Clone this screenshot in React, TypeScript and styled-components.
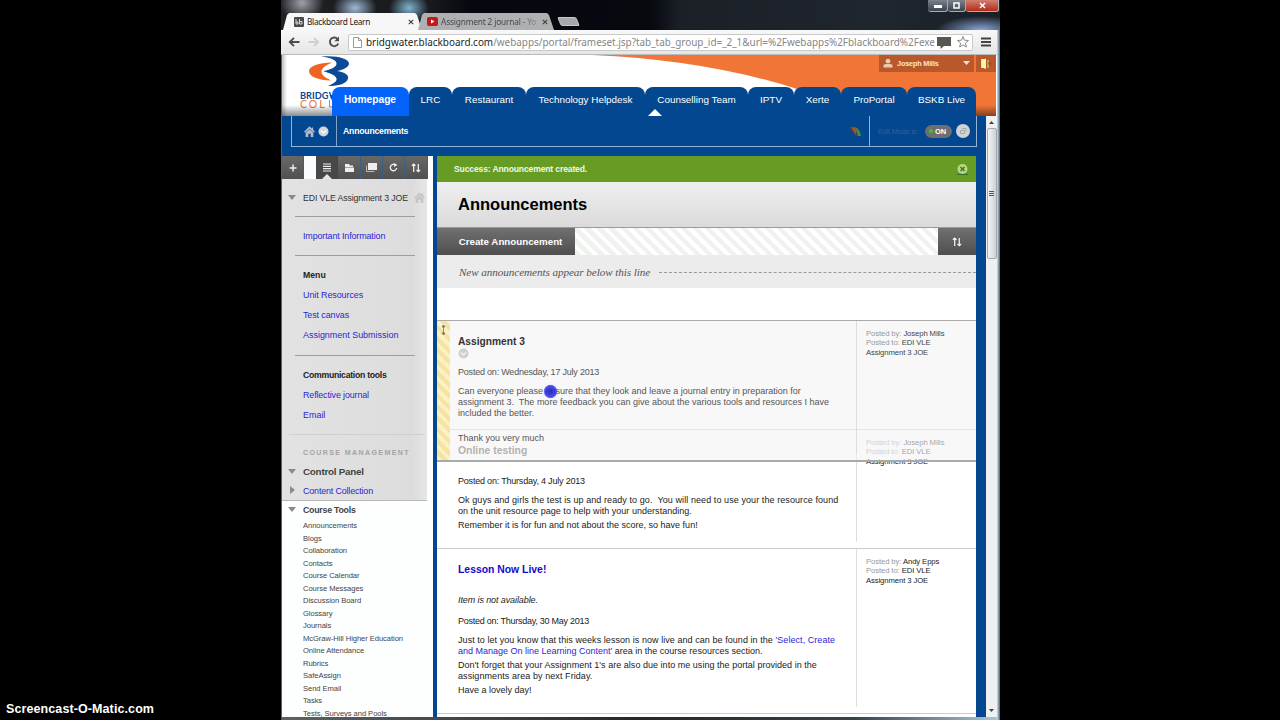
import React from "react";
import styled, { createGlobalStyle, css } from "styled-components";

const BLUE = "#02478f";
const LINK = "#2a1fd6";

const Global = createGlobalStyle`
  * { box-sizing: border-box; }
  body { margin: 0; background: #000; overflow: hidden; }
`;

const Screen = styled.div`
  position: relative;
  width: 1280px;
  height: 720px;
  overflow: hidden;
  padding-left: 281px;
  background: #000;
  font-family: "Liberation Sans", Arial, sans-serif;
  font-size: 9px;
  line-height: 11px;
  color: #222;
`;

const Watermark = styled.div`
  position: absolute;
  left: 6px;
  bottom: 3px;
  font-size: 12.5px;
  line-height: 16px;
  font-weight: bold;
  letter-spacing: 0.1px;
  color: #fff;
  white-space: nowrap;
`;

const Desktop = styled.div`
  width: 719px;
  height: 720px;
  display: flex;
  flex-direction: column;
  background: linear-gradient(90deg, #5d6266, #23282b 50%, #39434a 80%, #a9c3d2 715px, #b9d0dc 717px, #56778c 718px);
`;

const TabStrip = styled.div`
  height: 30px;
  flex: none;
  display: flex;
  justify-content: space-between;
  background:
    radial-gradient(ellipse 22px 18px at 21px 3px, #9da2a9, transparent),
    radial-gradient(ellipse 22px 16px at 74px 8px, #9fb9d6, transparent),
    radial-gradient(ellipse 20px 16px at 128px 8px, #7fb3cf, transparent),
    radial-gradient(ellipse 45px 14px at 700px 30px, #8aa5d6, transparent),
    linear-gradient(90deg, #1f2124 0, #17191d 150px, #07080f 190px, #07090f 370px, #1b2027 400px, #20262e 600px, #1a2027);
`;

const Tabs = styled.div`
  display: flex;
  align-items: flex-end;
  padding-left: 2px;
`;

const Tab = styled.div<{ $w: number; $on?: boolean }>`
  width: ${(p) => p.$w}px;
  height: 17px;
  margin-right: ${(p) => (p.$on ? -4 : 0)}px;
  padding: 0 ${(p) => (p.$on ? 8 : 6)}px 0 ${(p) => (p.$on ? 11 : 9)}px;
  display: flex;
  align-items: center;
  gap: 3px;
  clip-path: polygon(6px 0, calc(100% - 7px) 0, calc(100% - 5px) 2px, 100% 100%, 0 100%, 4px 2px);
  background: ${(p) => (p.$on ? "#f7f7f7" : "#aeb0b2")};
  color: ${(p) => (p.$on ? "#222" : "#444")};
  font-family: "Noto Sans", "Open Sans", sans-serif;
  font-size: 8.3px;
  letter-spacing: ${(p) => (p.$on ? -0.32 : -0.16)}px;
  white-space: nowrap;
`;

const TabLabel = styled.span<{ $fade?: boolean }>`
  flex: 1;
  margin-top: -1px;
  ${(p) =>
    p.$fade &&
    css`
      background: linear-gradient(90deg, #444 80%, #999);
      background-clip: text;
      color: transparent;
    `}
`;

const NewTab = styled.div`
  width: 19px;
  height: 9px;
  margin: 0 0 4px 5px;
  background: #a6a8ab;
  border: 1px solid #c8c8c8;
  border-radius: 2px;
  transform: skewX(22deg);
`;

const WindowButtons = styled.div`
  display: flex;
  height: 12px;
  margin-right: 1px;
`;

const WindowButton = styled.div<{ $w: number; $close?: boolean }>`
  width: ${(p) => p.$w}px;
  display: flex;
  align-items: center;
  justify-content: center;
  border: 1px solid #a8adb3;
  border-top: 0;
  border-left-width: 0;
  border-radius: 0 0 3px 3px;
  background: ${(p) => (p.$close ? "linear-gradient(#d08070, #b32b17)" : "linear-gradient(#7b828b, #3b434d)")};
`;

const AddressBar = styled.div`
  height: 25px;
  flex: none;
  display: flex;
  align-items: center;
  margin-right: 3px;
  padding: 0 6px 0 7px;
  background: linear-gradient(#f8f8f8, #e6e6e6);
  border-bottom: 1px solid #bbb;
`;

const NavIcons = styled.div`
  display: flex;
  gap: 8px;
  width: 60px;
`;

const UrlField = styled.div`
  flex: 1;
  height: 17px;
  min-width: 0;
  display: flex;
  align-items: center;
  padding: 0 2px 0 4px;
  border: 1px solid #c9c9c9;
  border-radius: 2px;
  background: #fff;
`;

const Url = styled.div`
  flex: 1;
  min-width: 0;
  padding-left: 4px;
  font-family: "Noto Sans", "Open Sans", sans-serif;
  font-size: 9.92px;
  line-height: 15px;
  color: #858585;
  white-space: nowrap;
  b { font-weight: normal; color: #1c1c1c; }
`;

const MenuIcon = styled.div`
  padding-left: 8px;
  display: flex;
`;

const Page = styled.div`
  width: 715px;
  height: 662px;
  margin-left: 1px;
  display: flex;
  flex-direction: column;
  background: ${BLUE};
`;

const Header = styled.header`
  position: relative;
  height: 61px;
  flex: none;
  display: flex;
  align-items: flex-end;
  background: #fff;
`;

const HeaderArt = styled.svg`
  position: absolute;
  inset: 0;
`;

const UserBar = styled.div`
  position: absolute;
  right: 1px;
  top: 0;
  display: flex;
  gap: 2px;
  font-size: 7.3px;
  font-weight: bold;
  letter-spacing: -0.18px;
  color: #fbe3d2;
`;

const UserCell = styled.div<{ $w: number }>`
  width: ${(p) => p.$w}px;
  height: 17px;
  display: flex;
  align-items: center;
  justify-content: space-between;
  padding: 0 4px 1px;
  background: #b9592b;
  span { flex: 1; padding-left: 4px; white-space: nowrap; }
`;

const MainNav = styled.nav`
  position: relative;
  display: flex;
  margin-left: 50px;
`;

const NavTab = styled.a<{ $w: number; $on?: boolean }>`
  width: ${(p) => p.$w}px;
  height: 29px;
  line-height: 26px;
  text-align: center;
  text-indent: ${(p) => (p.$on ? -1 : 0)}px;
  border-radius: 8px 8px 0 0;
  background: ${(p) => (p.$on ? "#0463fb" : BLUE)};
  color: #fff;
  font-size: ${(p) => (p.$on ? 10.2 : 9.9)}px;
  font-weight: ${(p) => (p.$on ? "bold" : "normal")};
  white-space: nowrap;
`;

const NavPointer = styled.div`
  position: absolute;
  left: 316px;
  bottom: 0;
  border: 7px solid transparent;
  border-top: 0;
  border-bottom: 7px solid #fff;
`;

const Crumbs = styled.div`
  height: 31px;
  flex: none;
  margin: 0 20px 9px 9px;
  display: flex;
  align-items: center;
  border: 1px solid #93b4d6;
  border-top: 0;
  color: #fff;
`;

const CrumbHome = styled.div`
  width: 45px;
  height: 100%;
  display: flex;
  align-items: center;
  gap: 3px;
  padding-left: 12px;
  border-right: 1px solid #7fa3c9;
`;

const CrumbTitle = styled.div`
  flex: 1;
  padding-left: 6px;
  font-weight: bold;
  font-size: 8.7px;
  letter-spacing: -0.22px;
`;

const EditMode = styled.div`
  width: 107px;
  height: 100%;
  margin-left: 8px;
  display: flex;
  align-items: center;
  gap: 4px;
  padding: 0 6px 0 8px;
  border-left: 1px solid #93b4d6;
  font-size: 7.3px;
  letter-spacing: -0.15px;
  color: #34618f;
  white-space: nowrap;
`;

const Toggle = styled.div`
  width: 27px;
  height: 13px;
  margin-left: auto;
  display: flex;
  align-items: center;
  gap: 2px;
  padding-left: 4px;
  border-radius: 7px;
  background: #6d6f70;
  color: #fff;
  font-size: 7.5px;
  font-weight: bold;
  i { width: 4px; height: 4px; border-radius: 50%; background: #3fc41e; }
`;

const Columns = styled.div`
  flex: 1;
  min-height: 0;
  display: flex;
`;

const Sidebar = styled.aside`
  width: 151px;
  overflow: hidden;
  background: #fdfefe;
`;

const SideTools = styled.div`
  display: flex;
  width: 146px;
  height: 23px;
`;

const SideTool = styled.div<{ $w: number; $kind?: "gap" | "on" }>`
  position: relative;
  width: ${(p) => p.$w}px;
  display: flex;
  align-items: center;
  justify-content: center;
  border-right: ${(p) => (p.$kind ? 0 : 1)}px solid #3b5f85;
  background: ${(p) => (p.$kind === "gap" ? "#fbfcff" : p.$kind === "on" ? "#484848" : "linear-gradient(#686868, #505050)")};
`;

const ToolPointer = styled.div`
  position: absolute;
  bottom: 0;
  border: 5px solid transparent;
  border-top: 0;
  border-bottom-color: #e6e6e6;
`;

const CourseMenu = styled.div`
  width: 145px;
  height: 322px;
  padding: 13px 0 0 21px;
  border-bottom: 1px solid #b9b9b9;
  background: linear-gradient(90deg, #e2e2e2, #dedede 70%, #dcdcdc 90%, #e6e6e6);
`;

const Row = styled.div<{ $mt?: number; $size?: number; $bold?: boolean; $link?: boolean; $color?: string; $ls?: number }>`
  position: relative;
  height: 12px;
  line-height: 12px;
  margin-top: ${(p) => p.$mt ?? 0}px;
  font-size: ${(p) => p.$size ?? 8.95}px;
  font-weight: ${(p) => (p.$bold ? "bold" : "normal")};
  letter-spacing: ${(p) => p.$ls ?? 0}px;
  color: ${(p) => p.$color ?? (p.$link ? LINK : "#222")};
  white-space: nowrap;
`;

const Rule = styled.hr<{ $mt: number; $light?: boolean }>`
  height: 1px;
  border: 0;
  margin: ${(p) => p.$mt}px ${(p) => (p.$light ? 2 : 12)}px 0 ${(p) => (p.$light ? -14 : -8)}px;
  background: ${(p) => (p.$light ? "#cfcfcf" : "#9d9d9d")};
`;

const Arrow = styled.i<{ $right?: boolean }>`
  position: absolute;
  left: -15px;
  top: 3px;
  border: 4px solid transparent;
  border-top: 5px solid #8a8a8a;
  border-bottom: 0;
  ${(p) =>
    p.$right &&
    css`
      left: -13px;
      top: 1px;
      border: 4px solid transparent;
      border-left: 5px solid #8a8a8a;
      border-right: 0;
    `}
`;

const SideHome = styled.span`
  position: absolute;
  left: 111px;
  top: 0;
  display: flex;
`;

const ToolList = styled.div`
  padding: 3px 0 0 21px;
`;

const Tool = styled.a`
  display: block;
  height: 12.53px;
  line-height: 12.5px;
  font-size: 7.6px;
  letter-spacing: -0.06px;
  color: #444;
  white-space: nowrap;
`;

const Tools = styled.div`
  padding-top: 4px;
`;

const Content = styled.main`
  width: 539px;
  margin-left: 4px;
  overflow: hidden;
  background: #fff;
`;

const Success = styled.div`
  height: 26px;
  display: flex;
  align-items: center;
  justify-content: space-between;
  padding: 0 8px 0 17px;
  background: #669c24;
  color: #f0f7e4;
  font-size: 8.55px;
  font-weight: bold;
  letter-spacing: -0.13px;
`;

const Title = styled.h1`
  margin: 0;
  height: 45px;
  padding-left: 21px;
  line-height: 44px;
  font-size: 16.5px;
  color: #000;
  background: linear-gradient(#efefef, #dadada);
`;

const ActionBar = styled.div`
  height: 28px;
  display: flex;
  border-top: 1px solid #9b9b9b;
  background: repeating-linear-gradient(45deg, #fff 0 4px, #f0f2f0 4px 8.5px);
`;

const ActionButton = styled.div<{ $w: number }>`
  width: ${(p) => p.$w}px;
  display: flex;
  align-items: center;
  justify-content: center;
  padding-left: ${(p) => (p.$w > 50 ? 9 : 0)}px;
  background: linear-gradient(#707070, #4f4f4f);
  color: #fff;
  font-size: 9.75px;
  font-weight: bold;
`;

const Spacer = styled.div`
  flex: 1;
`;

const NewLine = styled.div`
  height: 33px;
  display: flex;
  align-items: center;
  gap: 9px;
  padding: 1px 0 0 22px;
  background: #ececec;
  color: #555;
  font-family: "Liberation Serif", Georgia, serif;
  font-style: italic;
  font-size: 11.2px;
  letter-spacing: -0.09px;
  white-space: nowrap;
  &::after { content: ""; flex: 1; border-top: 1px dashed #999; }
`;

const List = styled.div`
  position: relative;
  padding-top: 141px;
`;

const Item = styled.article<{ $h: number }>`
  height: ${(p) => p.$h}px;
  display: flex;
  border-top: 1px solid #cbcfcc;
  background: #fff;
`;

const Dragged = styled(Item)`
  position: absolute;
  left: 0;
  top: 32px;
  width: 539px;
  border-top: 1px solid #aaa;
  border-bottom: 2px solid #aaa;
  background: rgba(243, 243, 243, 0.62);
`;

const Grip = styled.div`
  width: 13px;
  height: 100%;
  padding: 3px 0 0 3px;
  background: repeating-linear-gradient(45deg, #f9f2c6 0 4px, #f6e3a0 4px 8px);
`;

const Body = styled.div<{ $pad: number }>`
  width: ${(p) => p.$pad + 399}px;
  height: calc(100% - 6px);
  padding: 14px 0 0 ${(p) => p.$pad}px;
  border-right: 1px solid #dedede;
`;

const Line = styled.div<{ $mt?: number; $c?: string; $italic?: boolean; $ls?: number }>`
  height: 11px;
  line-height: 11px;
  margin-top: ${(p) => p.$mt ?? 0}px;
  font-size: 9px;
  font-style: ${(p) => (p.$italic ? "italic" : "normal")};
  letter-spacing: ${(p) => p.$ls ?? 0}px;
  color: ${(p) => p.$c ?? "#222"};
  white-space: pre;
  a { color: ${LINK}; }
`;

const Heading = styled.h3<{ $c: string; $size?: number }>`
  margin: 0;
  height: 13px;
  line-height: 13px;
  font-size: ${(p) => p.$size ?? 10.6}px;
  color: ${(p) => p.$c};
  white-space: nowrap;
`;

const Meta = styled.div<{ $c?: string }>`
  padding: 7.5px 0 0 9px;
  font-size: 7.7px;
  line-height: 9.8px;
  letter-spacing: -0.1px;
  color: ${(p) => p.$c ?? "#222"};
  white-space: nowrap;
  span { color: #999; }
`;

const Chevron = styled.div`
  height: 12px;
  display: flex;
`;

const ClickDot = styled.div`
  position: absolute;
  left: 107px;
  top: 97px;
  width: 13px;
  height: 13px;
  border-radius: 50%;
  background: radial-gradient(rgba(32, 32, 190, 0.9), rgba(60, 60, 255, 0.85));
  box-shadow: 0 0 1px #5b5bff;
`;

const Scrollbar = styled.div`
  width: 11px;
  height: 601px;
  margin: -40px 0 0 auto;
  display: flex;
  flex-direction: column;
  align-items: center;
  background: #eef0f1;
`;

const ScrollThumb = styled.div`
  width: 10px;
  height: 131px;
  margin: 0 0 auto;
  display: flex;
  align-items: center;
  justify-content: center;
  border: 1px solid #a5a9ab;
  border-radius: 2px;
  background: linear-gradient(90deg, #f4f4f4, #cdd0d2);
`;

const Person = () => (
  <svg width="10" height="10" viewBox="0 0 11 10" fill="#f0c8b0">
    <circle cx="5.5" cy="3" r="2.6" />
    <path d="M0.5 10V8q0-1.5 2.5-1.8h5Q10.500 6.500 10.500 8v2z" />
  </svg>
);

const House = ({ color, size = 12 }: { color: string; size?: number }) => (
  <svg width={size} height={size} viewBox="0 0 12 12" fill={color}>
    <path d="M6 0.300 0 6.200l1.200 1.200L6 3l4.800 4.400L12 6.200l-2-2V1.500H8.300V2.600z" />
    <path d="M1.800 7.300 6 3.500l4.200 3.800V12H7.300V8.500H4.700V12H1.800z" />
  </svg>
);

const RoundChevron = ({ fill, stroke }: { fill: string; stroke: string }) => (
  <svg width="11" height="11" viewBox="0 0 11 11">
    <circle cx="5.5" cy="5.5" r="5" fill={fill} />
    <path d="m3 4.500 2.500 2.500L8 4.500" fill="none" stroke={stroke} strokeWidth="1.400" />
  </svg>
);

const SortArrows = () => (
  <svg width="10" height="10" viewBox="0 0 10 10" fill="none" stroke="#eee" strokeWidth="1.300">
    <path d="M2.700 9V1.200M0.900 2.800l1.800-1.600 1.800 1.600M7.300 1v7.500M5.500 7l1.800 1.600L9.100 7" />
  </svg>
);

const Cross = ({ color = "#444", size = 6 }: { color?: string; size?: number }) => (
  <svg width={size} height={size} viewBox="0 0 6 6" stroke={color} strokeWidth="1.200">
    <path d="m0.800 0.800 4.400 4.400M5.200 0.800 0.800 5.200" />
  </svg>
);

const tools = [
  "Announcements", "Blogs", "Collaboration", "Contacts", "Course Calendar", "Course Messages",
  "Discussion Board", "Glossary", "Journals", "McGraw-Hill Higher Education", "Online Attendance",
  "Rubrics", "SafeAssign", "Send Email", "Tasks", "Tests, Surveys and Pools",
];

const navTabs: [string, number][] = [
  ["Homepage", 77], ["LRC", 43], ["Restaurant", 74], ["Technology Helpdesk", 119], ["Counselling Team", 103],
  ["IPTV", 46], ["Xerte", 47], ["ProPortal", 66], ["BSKB Live", 69],
];

const PostedMeta = ({ name, color }: { name: string; color?: string }) => (
  <Meta $c={color}>
    <span>Posted by:</span> {name}
    <br />
    <span>Posted to:</span> EDI VLE
    <br />
    Assignment 3 JOE
  </Meta>
);

export default function App() {
  return (
    <Screen>
      <Global />
      <Desktop>
        <TabStrip>
          <Tabs>
            <Tab $w={139} $on>
              <svg width="10" height="10" viewBox="0 0 10 10">
                <rect width="10" height="10" rx="1" fill="#4a4a48" />
                <path d="M2 2v5h2V5H2M5.500 2v5h2.500V4.500H5.500" fill="none" stroke="#d8d5cc" />
              </svg>
              <TabLabel>Blackboard Learn</TabLabel>
              <Cross />
            </Tab>
            <Tab $w={136}>
              <svg width="11" height="9" viewBox="0 0 11 9">
                <rect width="11" height="9" rx="2" fill="#c3171b" />
                <path d="M4 2.500v4L7.500 4.500z" fill="#fff" />
              </svg>
              <TabLabel $fade>Assignment 2 journal - Yo</TabLabel>
              <Cross />
            </Tab>
            <NewTab />
          </Tabs>
          <WindowButtons>
            <WindowButton $w={20}>
              <svg width="8" height="4"><rect width="8" height="3" y="1" fill="#fff" /></svg>
            </WindowButton>
            <WindowButton $w={18}>
              <svg width="7" height="7"><rect x="1" y="1" width="5" height="5" fill="none" stroke="#fff" strokeWidth="1.500" /></svg>
            </WindowButton>
            <WindowButton $w={33} $close><Cross color="#fff" size={7} /></WindowButton>
          </WindowButtons>
        </TabStrip>
        <AddressBar>
          <NavIcons>
            <svg width="12" height="12" viewBox="0 0 12 12" fill="none" stroke="#4d4d4d" strokeWidth="1.900"><path d="M11.500 6H2M6 1.800 1.800 6 6 10.200" /></svg>
            <svg width="12" height="12" viewBox="0 0 12 12" fill="none" stroke="#cfcfcf" strokeWidth="1.900"><path d="M0.500 6H10M6 1.800 10.200 6 6 10.200" /></svg>
            <svg width="12" height="12" viewBox="0 0 12 12"><path d="M9.600 3.200A4.300 4.300 0 1 0 10.200 7.500" fill="none" stroke="#4d4d4d" strokeWidth="1.900" /><path d="M11 0.500V5.200H6.300z" fill="#4d4d4d" /></svg>
          </NavIcons>
          <UrlField>
            <svg width="9" height="11" viewBox="0 0 9 11" fill="#fff" stroke="#999"><path d="M0.500 0.500h5l3 3v7h-8zM5.500 0.500v3h3" /></svg>
            <Url><b>bridgwater.blackboard.com</b>/webapps/portal/frameset.jsp?tab_tab_group_id=_2_1&amp;url=%2Fwebapps%2Fblackboard%2Fexe</Url>
            <svg width="14" height="13" viewBox="0 0 14 13"><path d="M0 1h14v9H7l-3.500 3V10H0z" fill="#555750" /></svg>
            <svg width="19" height="14" viewBox="-6 0 19 14" fill="#fff" stroke="#8b8b8b"><path d="m6 1.500 1.500 3.700 4 .3-3.100 2.600 1 3.900L6 9.900 2.600 12l1-3.900L.5 5.500l4-.3z" /></svg>
          </UrlField>
          <MenuIcon><svg width="10" height="10" fill="#444"><path d="M0 0.500h10v2H0zM0 4h10v2H0zM0 7.500h10v2H0z" /></svg></MenuIcon>
        </AddressBar>
        <Page>
          <Header>
            <HeaderArt width="714" height="61" viewBox="0 0 714 61">
              <defs>
                <linearGradient id="foot" x1="0" y1="0" x2="0" y2="1">
                  <stop offset="0" stopColor="#000" stopOpacity="0" />
                  <stop offset="1" stopColor="#000" stopOpacity="0.45" />
                </linearGradient>
                <linearGradient id="side" x1="0" y1="0" x2="1" y2="0">
                  <stop offset="0" stopColor="#000" stopOpacity="0.25" />
                  <stop offset="1" stopColor="#000" stopOpacity="0" />
                </linearGradient>
              </defs>
              <path d="M310 0Q425 5 515 34L530 61H714V0z" fill="#f17537" />
              <path d="M39 1.500C56 0 67 4 67 8.500C67 12 62 14.500 55 16C63 17.500 67 20 66 23.500C65 28.500 57 31 46 31C53 28 56 25.500 54 22.500C53 20 48 18 41.500 16.200C49 14.500 54 12.500 54.500 9C55 5.500 50 3 39 1.500z" fill="#0b4a97" />
              <path d="M50 7.500C37 7.500 27 11 27 16.200C27 21.500 36 25 49 25.500C43 22.500 39.500 20 39.500 16.800C39.500 13.500 43 10.500 50 7.500z" fill="#ef6423" />
              <text x="18" y="43.500" fontSize="9.2" fontWeight="bold" fill="#0b4a97" fontFamily="Lato, sans-serif">BRIDG</text>
              <path d="M47.500 37l1.800 6L50 40" fill="none" stroke="#0b4a97" strokeWidth="1.300" />
              <text x="18" y="52.500" fontSize="10.500" fill="#e5763c" letterSpacing="2" fontFamily="Lato, sans-serif">COL</text>
              <path d="M47.500 45v7H50" fill="none" stroke="#e5763c" />
              <rect y="50" width="714" height="11" fill="url(#foot)" />
              <rect width="5" height="61" fill="url(#side)" />
            </HeaderArt>
            <UserBar>
              <UserCell $w={95}>
                <Person />
                <span>Joseph Mills</span>
                <svg width="7" height="4" fill="#fbe0d0"><path d="M0 0h7L3.500 4z" /></svg>
              </UserCell>
              <UserCell $w={20}>
                <svg width="12" height="11" viewBox="0 0 12 11"><path d="M1 1h5v9H1z" fill="#e9e3b0" /><path d="m2 2 4-1.500V11L2 9.500z" fill="#fff3a8" /><path d="M7 2h2v8H7z" fill="#8cba5a" /><path d="M8 5.500h4M10 3.500v4" stroke="#d33" strokeWidth="1.500" /></svg>
              </UserCell>
            </UserBar>
            <MainNav>
              {navTabs.map(([label, w], i) => (
                <NavTab key={label} $w={w} $on={i === 0}>{label}</NavTab>
              ))}
              <NavPointer />
            </MainNav>
          </Header>
          <Crumbs>
            <CrumbHome>
              <House color="#aebccb" size={11} />
              <RoundChevron fill="#cfd6dc" stroke="#fff" />
            </CrumbHome>
            <CrumbTitle>Announcements</CrumbTitle>
            <svg width="12" height="10" viewBox="0 0 12 10"><path d="M0 1 5 0l6 10H6z" fill="#3c4653" /><path d="m2 1 5 8V2z" fill="#a9542f" /><path d="M6 1q5 2 6 9H9z" fill="#43913f" /><path d="M5 1q3 2 4 7z" fill="#a03a4a" /></svg>
            <EditMode>
              Edit Mode is:
              <Toggle><i />ON</Toggle>
              <svg width="14" height="14" viewBox="0 0 14 14"><circle cx="7" cy="7" r="7" fill="#cfd3d4" /><path d="M4.500 6.500h4v3h-4zM6 4.500h4v3" fill="none" stroke="#a4abad" /></svg>
            </EditMode>
          </Crumbs>
          <Columns>
            <Sidebar>
              <SideTools>
                <SideTool $w={22}><svg width="8" height="8" stroke="#eee" strokeWidth="1.500"><path d="M4 0.500v7M0.500 4h7" /></svg></SideTool>
                <SideTool $w={12} $kind="gap" />
                <SideTool $w={22} $kind="on">
                  <svg width="8" height="9" stroke="#eee" strokeWidth="1.200"><path d="M0 1h8M0 3.300h8M0 5.600h8M0 8h8" /></svg>
                  <ToolPointer />
                </SideTool>
                <SideTool $w={23}><svg width="9" height="8" fill="#eee"><path d="M0 0h4l1 1.500h3V3H0zM0 3.500h9V8H0z" /></svg></SideTool>
                <SideTool $w={22}><svg width="11" height="9"><path d="M0.500 2.500v6h8" fill="none" stroke="#bbb" /><path d="M2 0h9v7H2z" fill="#eee" /></svg></SideTool>
                <SideTool $w={22}><svg width="9" height="9" viewBox="0 0 9 9"><path d="M6.500 2A3.200 3.200 0 1 0 7.700 5" fill="none" stroke="#eee" strokeWidth="1.400" /><path d="M5 0v4l3.500-2z" fill="#eee" /></svg></SideTool>
                <SideTool $w={23}><SortArrows /></SideTool>
              </SideTools>
              <CourseMenu>
                <Row $color="#333" $size={8.75} $ls={-0.13}><Arrow />EDI VLE Assignment 3 JOE<SideHome><House color="#c5c5c5" size={11} /></SideHome></Row>
                <Rule $mt={12} />
                <Row $mt={13} $link $ls={-0.13}>Important Information</Row>
                <Rule $mt={13} />
                <Row $mt={13} $bold $size={8.7}>Menu</Row>
                <Row $mt={8} $link $ls={-0.07}>Unit Resources</Row>
                <Row $mt={8} $link $ls={-0.1}>Test canvas</Row>
                <Row $mt={8} $link>Assignment Submission</Row>
                <Rule $mt={14} />
                <Row $mt={13} $bold $size={8.7} $ls={-0.28}>Communication tools</Row>
                <Row $mt={8} $link $ls={-0.15}>Reflective journal</Row>
                <Row $mt={8} $link>Email</Row>
                <Rule $mt={13} $light />
                <Row $mt={12} $size={7.1} $bold $color="#a3a3a3" $ls={1.35}>COURSE MANAGEMENT</Row>
                <Row $mt={7} $size={9.8} $bold $color="#444" $ls={-0.22}><Arrow />Control Panel</Row>
                <Row $mt={7} $link $ls={-0.17}><Arrow $right />Content Collection</Row>
              </CourseMenu>
              <ToolList>
                <Row $bold $color="#444" $size={8.8} $ls={-0.25}><Arrow />Course Tools</Row>
                <Tools>{tools.map((t) => <Tool key={t}>{t}</Tool>)}</Tools>
              </ToolList>
            </Sidebar>
            <Content>
              <Success>
                Success: Announcement created.
                <svg width="11" height="11" viewBox="0 0 11 11"><circle cx="5.500" cy="5" r="5" fill="#b5d98b" /><path d="m3.500 3 4 4M7.500 3l-4 4" stroke="#47761a" strokeWidth="1.600" /><path d="M0 10.500h11" stroke="#356b2a" /></svg>
              </Success>
              <Title>Announcements</Title>
              <ActionBar>
                <ActionButton $w={138}>Create Announcement</ActionButton>
                <Spacer />
                <ActionButton $w={38}><SortArrows /></ActionButton>
              </ActionBar>
              <NewLine>New announcements appear below this line</NewLine>
              <List>
                <Item $h={119}>
                  <Body $pad={21}>
                    <Heading $c="#444" $size={10.4}>Online testing</Heading>
                    <Line $mt={19} $ls={-0.2}>Posted on: Thursday, 4 July 2013</Line>
                    <Line $mt={8} $ls={0.08}>Ok guys and girls the test is up and ready to go.  You will need to use your the resource found</Line>
                    <Line $ls={0.03}>on the unit resource page to help with your understanding.</Line>
                    <Line $mt={3}>Remember it is for fun and not about the score, so have fun!</Line>
                  </Body>
                  <PostedMeta name="Joseph Mills" />
                </Item>
                <Item $h={165}>
                  <Body $pad={21}>
                    <Heading $c="#1408cf" $size={10.4}>Lesson Now Live!</Heading>
                    <Line $mt={19} $italic $ls={-0.1}>Item is not available.</Line>
                    <Line $mt={10} $ls={-0.26}>Posted on: Thursday, 30 May 2013</Line>
                    <Line $mt={8} $ls={0.06}>Just to let you know that this weeks lesson is now live and can be found in the <a>'Select, Create</a></Line>
                    <Line><a>and Manage On line Learning Content'</a> area in the course resources section.</Line>
                    <Line $mt={3} $ls={0.03}>Don't forget that your Assignment 1's are also due into me using the portal provided in the</Line>
                    <Line $ls={0.08}>assignments area by next Friday.</Line>
                    <Line $mt={3}>Have a lovely day!</Line>
                  </Body>
                  <PostedMeta name="Andy Epps" />
                </Item>
                <Item $h={10} />
                <Dragged $h={142}>
                  <Grip>
                    <svg width="7" height="12" viewBox="0 0 7 12" stroke="#777" fill="#777"><path d="M3.500 1v10M2 3l1.500-2L5 3zM2 9l1.500 2L5 9z" strokeWidth="0.800" /></svg>
                  </Grip>
                  <Body $pad={8}>
                    <Heading $c="#333" $size={10.2}>Assignment 3</Heading>
                    <Chevron><RoundChevron fill="#d2cfcf" stroke="#f1f1f1" /></Chevron>
                    <Line $mt={7} $c="#555" $ls={-0.21}>Posted on: Wednesday, 17 July 2013</Line>
                    <Line $mt={8} $c="#555">Can everyone please ensure that they look and leave a journal entry in preparation for</Line>
                    <Line $c="#555">assignment 3.  The more feedback you can give about the various tools and resources I have</Line>
                    <Line $c="#555">included the better.</Line>
                    <Line $mt={14} $c="#555">Thank you very much</Line>
                  </Body>
                  <PostedMeta name="Joseph Mills" color="#444" />
                </Dragged>
                <ClickDot />
              </List>
            </Content>
            <Scrollbar>
              <svg width="7" height="12" viewBox="0 0 7 12" fill="#444"><path d="M1 8l2.500-3L6 8z" /></svg>
              <ScrollThumb><svg width="5" height="6" stroke="#555"><path d="M0 0.500h5M0 2.500h5M0 4.500h5" /></svg></ScrollThumb>
              <svg width="7" height="12" viewBox="0 0 7 12" fill="#444"><path d="M1 4l2.500 3L6 4z" /></svg>
            </Scrollbar>
          </Columns>
        </Page>
      </Desktop>
      <Watermark>Screencast-O-Matic.com</Watermark>
    </Screen>
  );
}
